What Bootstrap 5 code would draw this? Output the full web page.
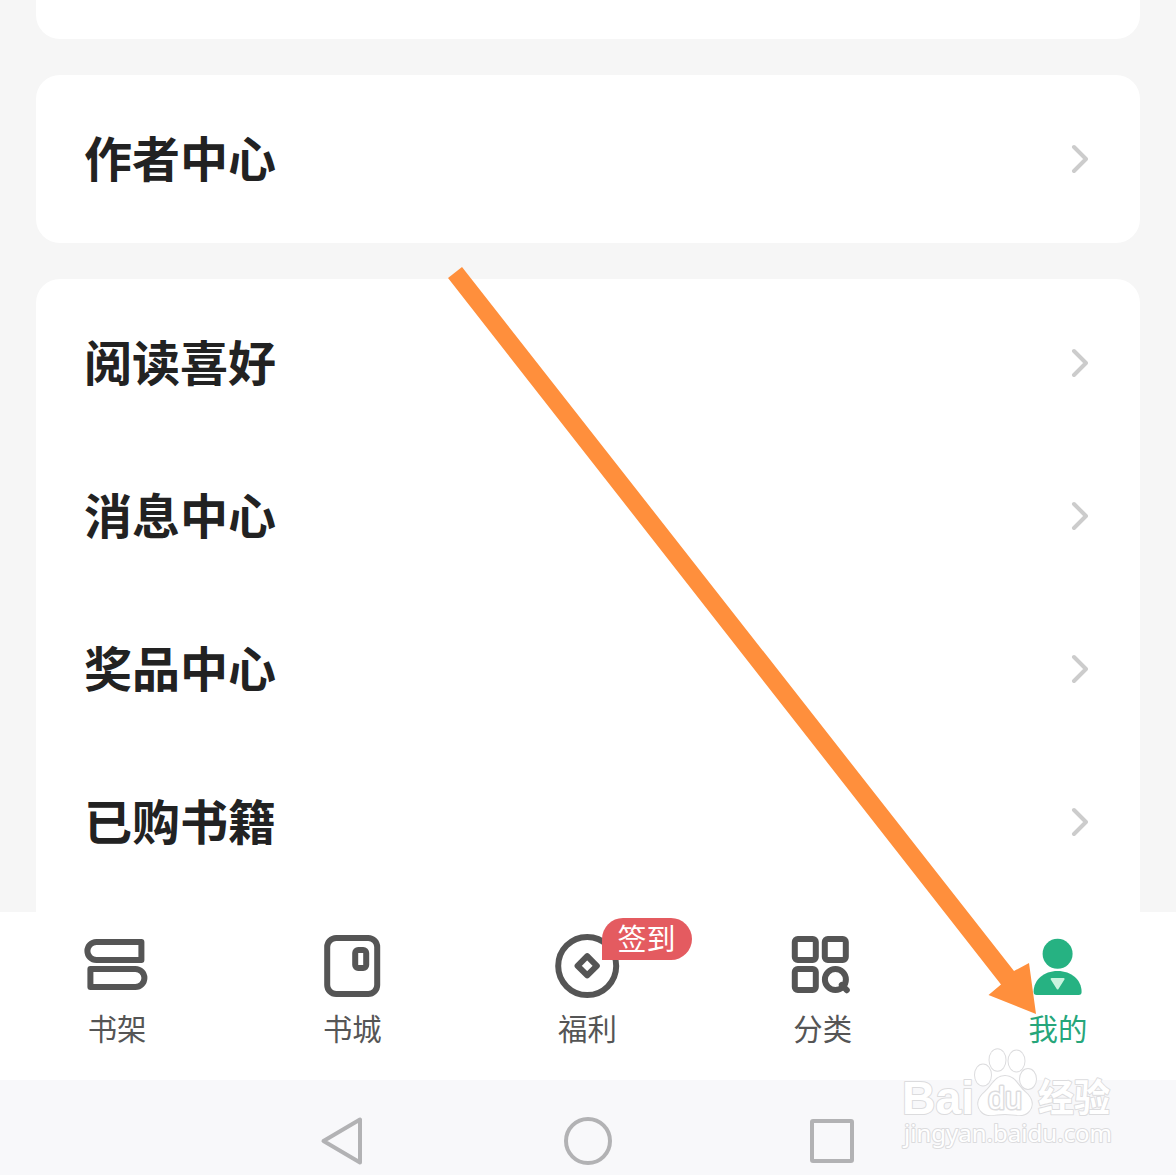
<!DOCTYPE html>
<html lang="zh-CN">
<head>
<meta charset="utf-8">
<meta name="viewport" content="width=device-width, initial-scale=1">
<title>我的</title>
<link href="https://cdn.jsdelivr.net/npm/bootstrap@5.3.0/dist/css/bootstrap.min.css" rel="stylesheet">
<style>
body{background:#f6f6f6;font-family:"Noto Sans CJK SC",sans-serif;color:#222}
.screen{height:1175px}
.panels{height:912px;padding:0 36px;gap:36px}
.panel{background:#fff;border-radius:24px}
.panel-prev{height:39px;border-radius:0 0 24px 24px}
.panel-author{padding:7px 0 8px}
.panel-menu{padding-top:7px;border-radius:24px 24px 0 0}
.entry{height:153px;padding:0 52px 0 48px;font-size:48px;font-weight:700;line-height:1;color:#222;text-decoration:none}
.entry span{padding-bottom:5px}
.tabs{height:168px;background:#fff;padding-top:18px}
.tab{flex:1 1 0;color:#555;font-size:29.4px;line-height:30px;text-decoration:none}
.tab svg{width:80px;height:72px;margin-bottom:10px}
.tab > span:not(.sign){padding-right:1px}
.tab.current{color:#26a67a}
.sign{top:-12px;left:131.5px;width:90px;height:42px;border-radius:21px 21px 21px 0;background:#e45b60;color:#fff;font-size:29px;line-height:38px;padding-right:1px}
.sysbar{height:95px;background:#f8f8fa}
.overlay{inset:0;width:1176px;height:1175px;pointer-events:none}
.wm{fill:#fff;stroke:#dcdcde;stroke-width:2;paint-order:stroke;stroke-linejoin:round}
</style>
</head>
<body>
<div class="screen position-relative overflow-hidden d-flex flex-column">
  <main class="panels d-flex flex-column overflow-hidden flex-shrink-0">
    <section class="panel panel-prev flex-shrink-0"></section>
    <section class="panel panel-author flex-shrink-0">
      <a class="entry d-flex align-items-center justify-content-between" href="#"><span>作者中心</span><svg width="20" height="32" viewBox="0 0 20 32" fill="none" stroke="#ccc" stroke-width="4" stroke-linecap="round" stroke-linejoin="round"><path d="M6 4 18 16 6 28"/></svg></a>
    </section>
    <section class="panel panel-menu flex-grow-1">
      <a class="entry d-flex align-items-center justify-content-between" href="#"><span>阅读喜好</span><svg width="20" height="32" viewBox="0 0 20 32" fill="none" stroke="#ccc" stroke-width="4" stroke-linecap="round" stroke-linejoin="round"><path d="M6 4 18 16 6 28"/></svg></a>
      <a class="entry d-flex align-items-center justify-content-between" href="#"><span>消息中心</span><svg width="20" height="32" viewBox="0 0 20 32" fill="none" stroke="#ccc" stroke-width="4" stroke-linecap="round" stroke-linejoin="round"><path d="M6 4 18 16 6 28"/></svg></a>
      <a class="entry d-flex align-items-center justify-content-between" href="#"><span>奖品中心</span><svg width="20" height="32" viewBox="0 0 20 32" fill="none" stroke="#ccc" stroke-width="4" stroke-linecap="round" stroke-linejoin="round"><path d="M6 4 18 16 6 28"/></svg></a>
      <a class="entry d-flex align-items-center justify-content-between" href="#"><span>已购书籍</span><svg width="20" height="32" viewBox="0 0 20 32" fill="none" stroke="#ccc" stroke-width="4" stroke-linecap="round" stroke-linejoin="round"><path d="M6 4 18 16 6 28"/></svg></a>
    </section>
  </main>
  <nav class="tabs d-flex flex-shrink-0">
    <a class="tab d-flex flex-column align-items-center" href="#">
      <svg viewBox="77.6 930 80 72" fill="none" stroke="#555" stroke-width="6" stroke-linejoin="round"><path d="M96 942h45v18H96a9 9 0 0 1 0-18ZM90 969h45a9 9 0 0 1 0 18H90Z"/></svg>
      <span>书架</span></a>
    <a class="tab d-flex flex-column align-items-center" href="#">
      <svg viewBox="312.8 930 80 72" fill="none" stroke="#555" stroke-width="6"><rect x="327" y="938" width="50" height="56" rx="9"/><rect x="355" y="950" width="11" height="18" rx="3"/></svg>
      <span>书城</span></a>
    <a class="tab d-flex flex-column align-items-center position-relative" href="#">
      <svg viewBox="548 930 80 72" fill="none" stroke="#555" stroke-width="6" stroke-linejoin="round"><circle cx="587.2" cy="966" r="29"/><path d="M587.2 956.2l9.6 9.6-9.6 9.6-9.6-9.6Z"/></svg>
      <span>福利</span><span class="sign position-absolute text-center">签到</span></a>
    <a class="tab d-flex flex-column align-items-center" href="#">
      <svg viewBox="783.2 930 80 72" fill="none" stroke="#555" stroke-width="6" stroke-linecap="round"><rect x="795" y="939" width="21" height="21" rx="3"/><rect x="825" y="939" width="21" height="21" rx="3"/><rect x="795" y="969" width="21" height="21" rx="3"/><circle cx="835.6" cy="979.5" r="10.5"/><path d="M842 985l5 5.2"/></svg>
      <span>分类</span></a>
    <a class="tab current d-flex flex-column align-items-center" href="#">
      <svg viewBox="1018.4 930 80 72" fill="#26b282"><circle cx="1058" cy="953.8" r="15"/><path d="M1034 992c0-12 10-21 24-21s24 9 24 21q0 3-3 3h-42q-3 0-3-3Z"/><path d="M1052 979h12l-6 9.5Z" fill="#c9f3df" stroke="#c9f3df" stroke-width="2" stroke-linejoin="round"/></svg>
      <span>我的</span></a>
  </nav>
  <footer class="sysbar flex-shrink-0">
    <svg class="d-block" width="1176" height="95" viewBox="0 1080 1176 95" fill="none" stroke="#b2b2b4" stroke-width="4" stroke-linejoin="round"><path d="M323.5 1141 360 1119.5V1162.5Z"/><circle cx="588" cy="1141" r="22"/><rect x="812" y="1121" width="40" height="40" rx="1"/></svg>
  </footer>
  <svg class="overlay position-absolute" viewBox="0 0 1176 1175">
    <g class="wm">
      <text x="902" y="1114" font-family="Liberation Sans" font-weight="700" font-size="47" textLength="72" lengthAdjust="spacingAndGlyphs">Bai</text>
      <ellipse cx="983" cy="1075" rx="8" ry="10.5"/><ellipse cx="997.5" cy="1060" rx="8" ry="10.8"/><ellipse cx="1016.500" cy="1061" rx="8" ry="10.500"/><ellipse cx="1028" cy="1079" rx="8" ry="10"/>
      <path d="M1005 1076c10 0 12 9 20 16 7 6 9 13 4 19-6 7-14 3-24 3s-18 4-24-3c-5-6-3-13 4-19 8-7 10-16 20-16Z"/>
      <text x="988" y="1109" font-family="Liberation Sans" font-size="31" textLength="34" lengthAdjust="spacingAndGlyphs" stroke-width="3">du</text>
      <text x="1038" y="1111" font-family="Noto Sans CJK SC" font-weight="700" font-size="38" textLength="72" lengthAdjust="spacingAndGlyphs">经验</text>
      <text x="904" y="1142" font-family="Noto Sans" font-size="23" textLength="208" lengthAdjust="spacingAndGlyphs">jingyan.baidu.com</text>
    </g>
    <path fill="#ff8f3c" d="M448 278 462 267 1014 971 1029 963 1036 1014 988.500 995 1001 984.500Z"/>
  </svg>
</div>
<script src="https://cdn.jsdelivr.net/npm/bootstrap@5.3.0/dist/js/bootstrap.bundle.min.js"></script>
</body>
</html>
